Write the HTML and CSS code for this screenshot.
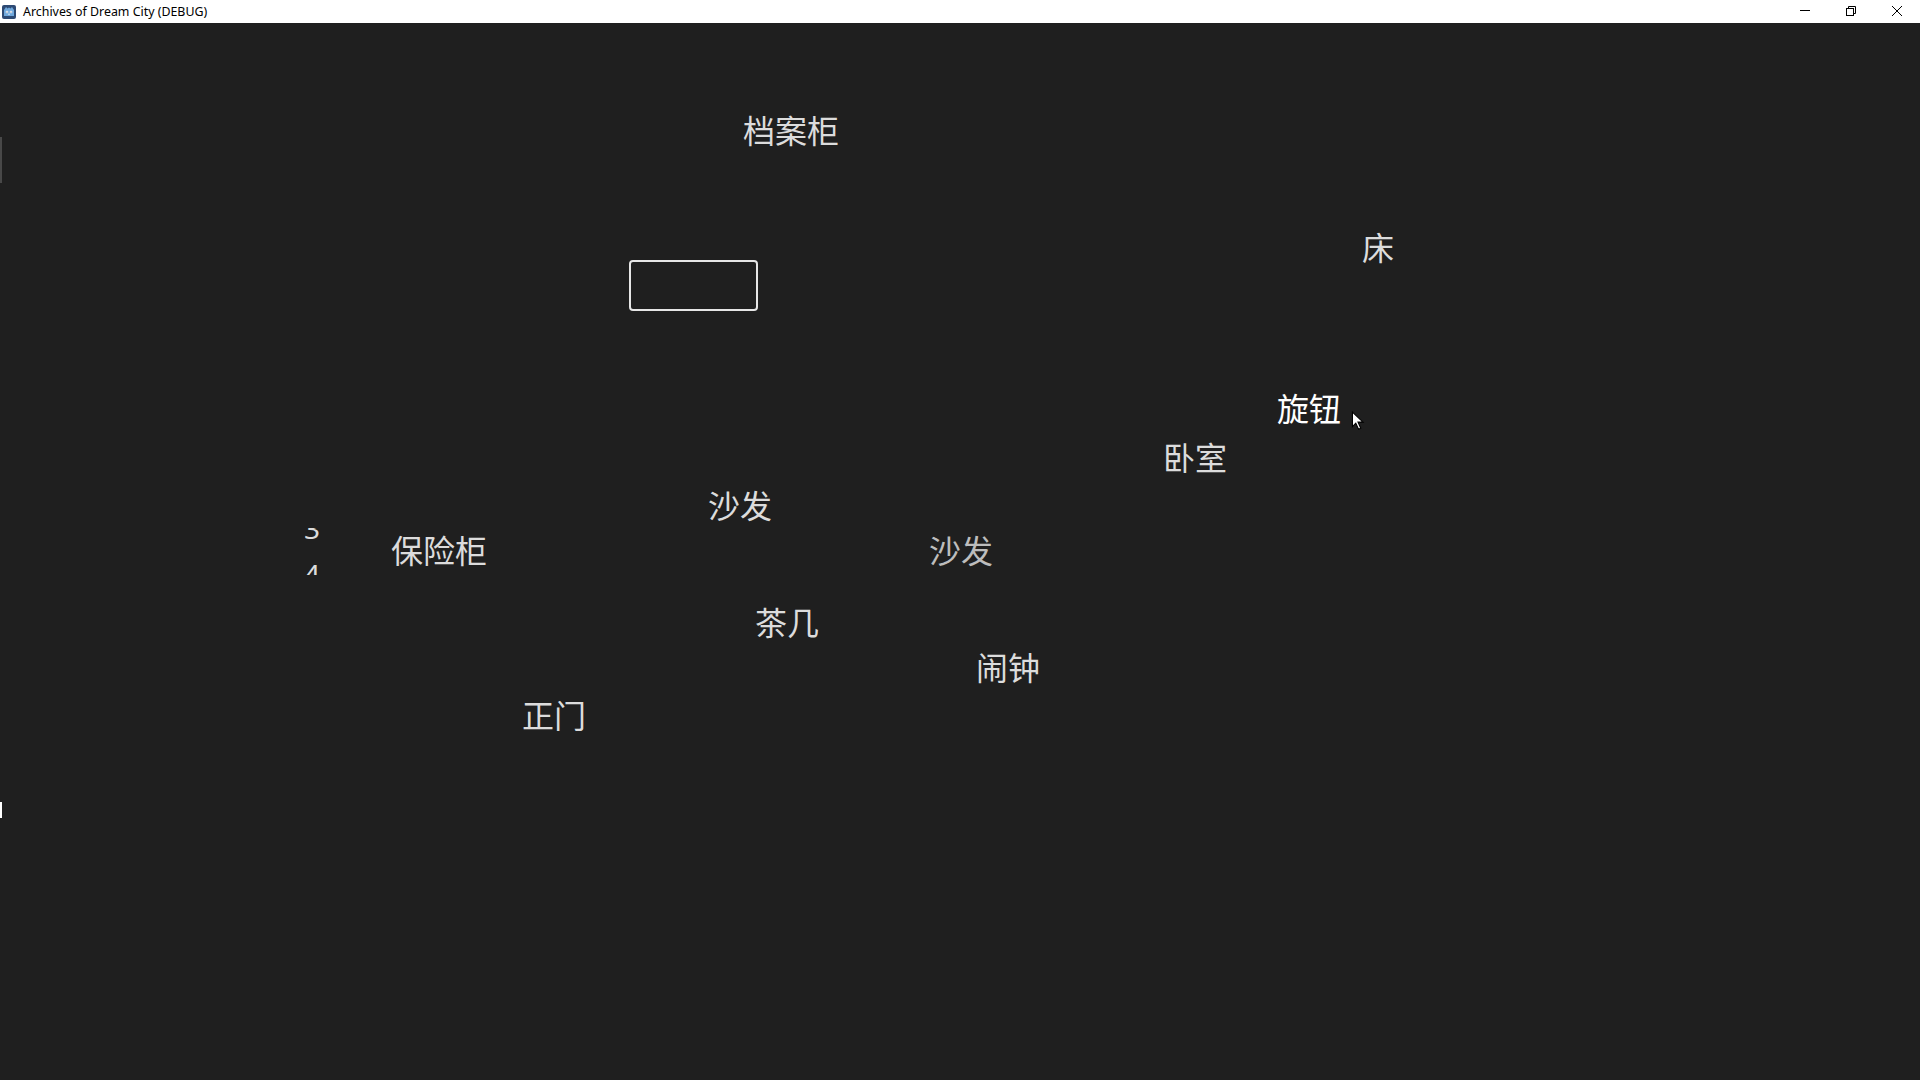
FILE: index.html
```html
<!DOCTYPE html>
<html lang="zh">
<head>
    <meta charset="utf-8">
    <link rel="stylesheet" href="styles.css">
    <title>Archives of Dream City (DEBUG)</title>
</head>
<body>
    <!--WINDOW TITLE BAR-->
    <div class="titlebar">
        <div class="title">
            <svg class="app-icon" width="14" height="14" viewBox="0 0 14 14">
                <rect x="0" y="0" width="14" height="14" rx="2" fill="#2d4a74"/>
                <path d="M2 5 L4 2 L5.5 3.5 L7 2.5 L8.5 3.5 L10 2 L12 5 L12 11 L2 11 Z" fill="#6fa8dc"/>
                <circle cx="5" cy="7" r="1.3" fill="#fff"/>
                <circle cx="9" cy="7" r="1.3" fill="#fff"/>
                <circle cx="5" cy="7" r="0.6" fill="#2d4a74"/>
                <circle cx="9" cy="7" r="0.6" fill="#2d4a74"/>
                <rect x="6.4" y="8.6" width="1.2" height="1.2" fill="#fff"/>
            </svg>
            <span class="title-text">Archives of Dream City (DEBUG)</span>
        </div>
        <div class="controls">
            <svg class="ctl" width="46" height="23" viewBox="0 0 46 23">
                <line x1="18" y1="10.5" x2="28" y2="10.5" stroke="#000" stroke-width="1"/>
            </svg>
            <svg class="ctl" width="46" height="23" viewBox="0 0 46 23">
                <rect x="18.5" y="8.5" width="7" height="7" fill="none" stroke="#000" stroke-width="1"/>
                <path d="M20.5 8.5 V6.5 H27.5 V13.5 H25.5" fill="none" stroke="#000" stroke-width="1"/>
            </svg>
            <svg class="ctl" width="46" height="23" viewBox="0 0 46 23">
                <path d="M18 6 L28 16 M28 6 L18 16" stroke="#000" stroke-width="1"/>
            </svg>
        </div>
    </div>

    <!--GAME SCENE-->
    <div class="scene">
        <div class="edge-bar grey"></div>
        <div class="edge-bar white"></div>

        <div class="label" style="left:743px; top:90px;">档案柜</div>
        <div class="slot" style="left:629px; top:237px;"></div>
        <div class="label" style="left:1362px; top:207px;">床</div>
        <div class="label bright" style="left:1277px; top:368px;">旋钮</div>
        <div class="label" style="left:1163px; top:417px;">卧室</div>
        <div class="label" style="left:708px; top:465px;">沙发</div>
        <div class="label" style="left:391px; top:510px;">保险柜</div>
        <div class="label dim" style="left:929px; top:510px;">沙发</div>
        <div class="label" style="left:755px; top:582px;">茶几</div>
        <div class="label" style="left:976px; top:627px;">闹钟</div>
        <div class="label" style="left:522px; top:675px;">正门</div>

        <!--dial digits, scrolled so only slivers show-->
        <div class="clip top-clip"><span>3</span></div>
        <div class="clip bottom-clip"><span>4</span></div>

        <svg class="cursor" width="14" height="20" viewBox="0 0 12 18">
            <path d="M1 1 L1 14 L4 11 L6.5 16.5 L8.5 15.5 L6 10 L10.5 10 Z" fill="#fff" stroke="#000" stroke-width="1"/>
        </svg>
    </div>
</body>
</html>
```

FILE: styles.css
```css
body{
    margin: 0;
    width: 1920px;
    height: 1080px;
    overflow: hidden;
    background-color: #1f1f1f;
    font-family: "Noto Sans CJK SC", "Noto Sans", sans-serif;
}
.titlebar{
    height: 23px;
    background-color: #ffffff;
    display: flex;
    justify-content: space-between;
    align-items: center;
}
.title{
    display: flex;
    align-items: center;
    gap: 7px;
    padding-left: 2px;
}
.title-text{
    font-family: "Noto Sans", "Liberation Sans", sans-serif;
    font-size: 12.4px;
    color: #000;
}
.controls{
    display: flex;
}
.ctl{
    display: block;
}
.scene{
    position: relative;
    height: 1057px;
    background-color: #1f1f1f;
}
.label{
    position: absolute;
    font-size: 32px;
    line-height: 32px;
    color: #dcdcdc;
    white-space: nowrap;
}
.bright{
    color: #ffffff;
}
.dim{
    color: #bdbdbd;
}
.slot{
    position: absolute;
    width: 125px;
    height: 47px;
    border: 2px solid #e6e6e6;
    border-radius: 4px;
}
.edge-bar{
    position: absolute;
    left: 0;
    width: 2px;
}
.edge-bar.grey{
    top: 114px;
    height: 46px;
    background-color: #484848;
}
.edge-bar.white{
    top: 779px;
    height: 16px;
    background-color: #ffffff;
}
.clip{
    position: absolute;
    left: 300px;
    width: 26px;
    overflow: hidden;
    color: #dcdcdc;
    font-family: "Noto Sans", sans-serif;
    font-size: 28px;
    line-height: 28px;
}
.clip span{
    position: absolute;
    left: 4px;
}
.top-clip{
    top: 505px;
    height: 11px;
}
.top-clip span{
    top: -14px;
}
.bottom-clip{
    top: 542px;
    height: 10px;
}
.bottom-clip span{
    top: -5px;
}
.cursor{
    position: absolute;
    left: 1351px;
    top: 388px;
}
```
